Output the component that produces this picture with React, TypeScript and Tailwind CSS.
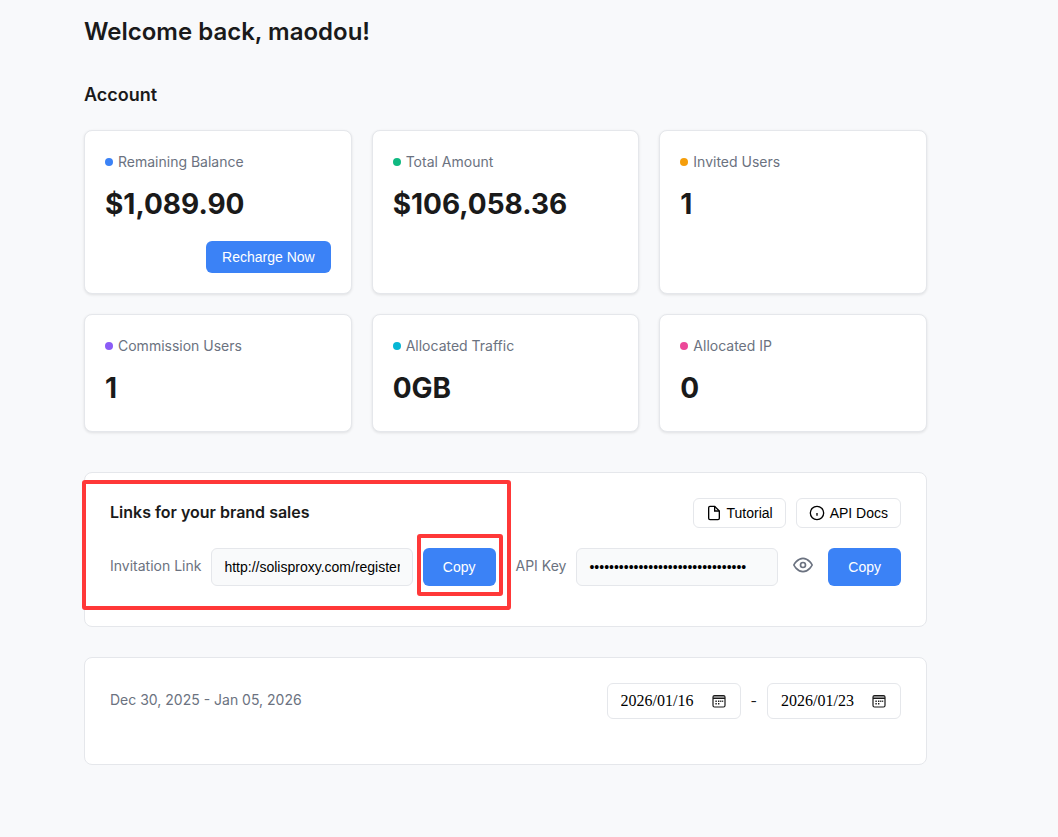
import { useState } from 'react'
import clsx from 'clsx'

interface Stat {
  label: string
  value: string
  dot: string
  action?: string
}

const stats: Stat[] = [
  { label: 'Remaining Balance', value: '$1,089.90', dot: 'bg-[#3b82f6]', action: 'Recharge Now' },
  { label: 'Total Amount', value: '$106,058.36', dot: 'bg-[#10b981]' },
  { label: 'Invited Users', value: '1', dot: 'bg-[#f59e0b]' },
  { label: 'Commission Users', value: '1', dot: 'bg-[#8b5cf6]' },
  { label: 'Allocated Traffic', value: '0GB', dot: 'bg-[#06b6d4]' },
  { label: 'Allocated IP', value: '0', dot: 'bg-[#ec4899]' },
]

function StatCard({ label, value, dot, action }: Stat) {
  return (
    <div className="flex flex-col rounded-lg border border-[#e5e7eb] bg-white p-5 shadow-[0_1px_3px_rgba(0,0,0,0.1)]">
      <div className="flex items-center gap-[5px] mb-2">
        <span className={clsx('size-2 rounded-full', dot)} />
        <span className="text-sm leading-[22px] text-[#6b7280]">{label}</span>
      </div>
      <p className="text-[28px] leading-[46px] font-bold text-[#1a1a1a]">{value}</p>
      {action && (
        <button className="mt-3.5 h-8 self-end rounded-md bg-[#3b82f6] px-4 font-['Liberation_Sans',Arial,sans-serif] text-sm text-white">
          {action}
        </button>
      )}
    </div>
  )
}

function CopyButton() {
  return (
    <button className="h-[38px] rounded-md bg-[#3b82f6] px-5 font-['Liberation_Sans',Arial,sans-serif] text-sm text-white">
      Copy
    </button>
  )
}

function FileIcon() {
  return (
    <svg width="16" height="16" viewBox="0 0 24 24" fill="none" stroke="currentColor" strokeWidth="2">
      <path d="M13 2H6a2 2 0 0 0-2 2v16a2 2 0 0 0 2 2h12a2 2 0 0 0 2-2V9z" />
      <path d="M13 2v7h7" />
    </svg>
  )
}

function InfoIcon() {
  return (
    <svg width="16" height="16" viewBox="0 0 24 24" fill="none" stroke="currentColor" strokeWidth="2">
      <circle cx="12" cy="12" r="10" />
      <path d="M12 16v-4" />
    </svg>
  )
}

function EyeIcon() {
  return (
    <svg width="20" height="20" viewBox="0 0 24 24" fill="none" stroke="currentColor" strokeWidth="2">
      <path d="M1 12s4-8 11-8 11 8 11 8-4 8-11 8-11-8-11-8z" />
      <circle cx="12" cy="12" r="3" />
    </svg>
  )
}

function CalendarIcon() {
  return (
    <svg width="14" height="14" viewBox="0 0 14 14" fill="none" stroke="#1a1a1a">
      <path d="M1 3h12" stroke="#8a8a8a" strokeWidth="2" />
      <rect x="1" y="1.5" width="12" height="11.5" rx="1.5" strokeWidth="1.2" />
      <path d="M1 4.5h12" strokeWidth="1" />
      <path d="M6 7.2h1.4M8.2 7.2h1.2M10.2 7.2h1M3.4 9.8h1.4M6 9.8h1.4M3.4 7.2h1.4" strokeWidth="1.4" />
    </svg>
  )
}

interface DateFieldProps {
  label: string
  value: string
}

function DateField({ label, value }: DateFieldProps) {
  return (
    <div className="flex h-9 w-[134px] items-center justify-between rounded-md border border-[#e5e7eb] bg-white pl-[13px] pr-3.5">
      <input
        type="text"
        aria-label={label}
        defaultValue={value}
        className="w-20 font-['Liberation_Serif',serif] text-base text-black outline-none"
      />
      <button aria-label={`Pick ${label.toLowerCase()}`}>
        <CalendarIcon />
      </button>
    </div>
  )
}

export default function App() {
  const [showKey, setShowKey] = useState(false)

  return (
    <main className="min-h-screen bg-[#f8f9fb] pt-3 pr-[131px] pb-[72px] pl-[84px] font-['Inter',sans-serif] text-[#1a1a1a]">
      <h1 className="text-2xl leading-10 font-semibold">Welcome back, maodou!</h1>

      {/* Account overview */}
      <h2 className="mt-7 mb-5 text-lg leading-[30px] font-semibold">Account</h2>
      <div className="grid grid-cols-3 gap-5">
        {stats.map((stat) => (
          <StatCard key={stat.label} {...stat} />
        ))}
      </div>

      {/* Brand links */}
      <section className="mt-10 rounded-lg border border-[#e5e7eb] bg-white px-[25px] pt-[25px] pb-10">
        <div className="flex items-start justify-between mb-5">
          <h3 className="text-base leading-7 font-semibold">Links for your brand sales</h3>
          <div className="flex gap-2.5 font-['Liberation_Sans',Arial,sans-serif] text-sm text-black">
            <button className="flex h-[30px] items-center gap-1 rounded-md border border-[#e5e7eb] px-3">
              <FileIcon />
              Tutorial
            </button>
            <button className="flex h-[30px] items-center gap-[5px] rounded-md border border-[#e5e7eb] px-3">
              <InfoIcon />
              API Docs
            </button>
          </div>
        </div>

        <div className="flex gap-5">
          <div className="relative flex flex-1 items-center gap-2.5">
            <label htmlFor="invite" className="shrink-0 pb-0.5 text-sm text-[#6b7280]">
              Invitation Link
            </label>
            <input
              id="invite"
              type="text"
              readOnly
              value="http://solisproxy.com/register"
              className="h-[38px] w-0 min-w-0 flex-1 rounded-md border border-[#e5e7eb] bg-[#f9fafb] px-3 font-['Liberation_Sans',Arial,sans-serif] text-sm text-black"
            />
            <div className="relative">
              <CopyButton />
              <div className="pointer-events-none absolute -top-3.5 -right-[7px] -bottom-2.5 -left-1.5 rounded-[3px] border-4 border-[#ff3838]" />
            </div>
            <div className="pointer-events-none absolute -top-[68px] -right-[15px] -bottom-6 -left-7 rounded-[3px] border-4 border-[#ff3838]" />
          </div>

          <div className="flex flex-1 items-center">
            <label htmlFor="api-key" className="shrink-0 mr-2.5 pb-0.5 text-sm text-[#6b7280]">
              API Key
            </label>
            <input
              id="api-key"
              type={showKey ? 'text' : 'password'}
              readOnly
              value="0123456789abcdef0123456789abcdef"
              className="h-[38px] w-0 min-w-0 flex-1 rounded-md border border-[#e5e7eb] bg-[#f9fafb] px-3 font-['Liberation_Sans',Arial,sans-serif] text-sm text-black"
            />
            <button
              aria-label="Show API key"
              onClick={() => setShowKey(!showKey)}
              className="mx-[15px] pb-1 text-[#6b7280]"
            >
              <EyeIcon />
            </button>
            <CopyButton />
          </div>
        </div>
      </section>

      {/* Date range */}
      <section className="mt-[30px] flex items-center justify-between rounded-lg border border-[#e5e7eb] bg-white px-[25px] pt-[25px] pb-[45px]">
        <p className="pb-0.5 text-sm text-[#6b7280]">Dec 30, 2025 - Jan 05, 2026</p>
        <div className="flex items-center gap-2.5 text-sm">
          <DateField label="Start date" value="2026/01/16" />
          <span>-</span>
          <DateField label="End date" value="2026/01/23" />
        </div>
      </section>
    </main>
  )
}
